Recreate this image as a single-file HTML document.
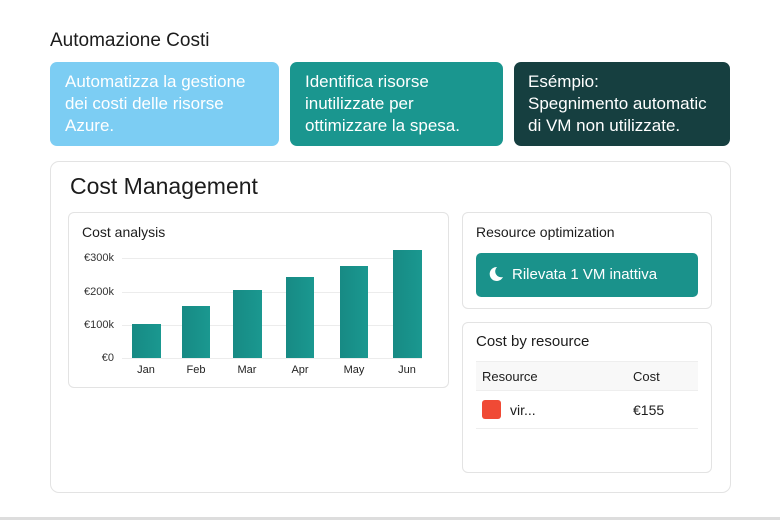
<!DOCTYPE html><html><head><style>
*{margin:0;padding:0;box-sizing:border-box}
body{width:780px;height:520px;background:#fff;font-family:"Liberation Sans",sans-serif;position:relative;overflow:hidden;color:#1c1c1c}
.a{position:absolute}
.card{position:absolute;border-radius:7px;color:#fff;font-size:17px;line-height:22px;padding:9px 15px}
.box{position:absolute;border:1px solid #e3e3e3;border-radius:6px;background:#fff}
.yl{position:absolute;font-size:11px;color:#333;right:0;width:50px;text-align:right}
.bar{position:absolute;background:linear-gradient(90deg,#178a84,#1a9890);bottom:162px}
.xl{position:absolute;font-size:11px;top:364px;width:40px;text-align:center;color:#222}
.gl{position:absolute;left:122px;width:300px;height:1px;background:#ececec}
</style></head><body>
<div class="a" style="left:50px;top:30px;font-size:19px">Automazione Costi</div>
<div class="card" style="left:50px;top:62px;width:229px;height:84px;background:#7ccdf3">Automatizza la gestione dei costi delle risorse Azure.</div>
<div class="card" style="left:290px;top:62px;width:213px;height:84px;background:#1a968f">Identifica risorse inutilizzate per ottimizzare la spesa.</div>
<div class="card" style="left:514px;top:62px;width:216px;height:84px;background:#163f40;padding-left:14px;white-space:nowrap;overflow:hidden">Esémpio:<br>Spegnimento automatic<br>di VM non utilizzate.</div>
<div class="box" style="left:50px;top:161px;width:681px;height:332px;border-radius:9px"></div>
<div class="a" style="left:70px;top:173px;font-size:23px">Cost Management</div>
<div class="box" style="left:68px;top:212px;width:381px;height:176px"></div>
<div class="a" style="left:82px;top:224px;font-size:14px">Cost analysis</div>
<div class="gl" style="top:258px"></div><div class="gl" style="top:292px"></div><div class="gl" style="top:325px"></div><div class="gl" style="top:358px"></div>
<div class="yl" style="left:64px;top:252px">€300k</div>
<div class="yl" style="left:64px;top:286px">€200k</div>
<div class="yl" style="left:64px;top:319px">€100k</div>
<div class="yl" style="left:64px;top:352px">€0</div>
<div class="bar" style="left:132px;width:29px;top:324px;height:34px"></div>
<div class="bar" style="left:182px;width:28px;top:306px;height:52px"></div>
<div class="bar" style="left:233px;width:29px;top:290px;height:68px"></div>
<div class="bar" style="left:286px;width:28px;top:277px;height:81px"></div>
<div class="bar" style="left:340px;width:28px;top:266px;height:92px"></div>
<div class="bar" style="left:393px;width:29px;top:250px;height:108px"></div>
<div class="xl" style="left:126px">Jan</div><div class="xl" style="left:176px">Feb</div><div class="xl" style="left:227px">Mar</div><div class="xl" style="left:280px">Apr</div><div class="xl" style="left:334px">May</div><div class="xl" style="left:387px">Jun</div>
<div class="box" style="left:462px;top:212px;width:250px;height:97px"></div>
<div class="a" style="left:476px;top:224px;font-size:14px">Resource optimization</div>
<div class="a" style="left:476px;top:253px;width:222px;height:44px;background:#1a928b;border-radius:5px;color:#fff;font-size:15px;line-height:44px;padding-left:36px">Rilevata 1 VM inattiva</div>
<svg class="a" style="left:488px;top:266px" width="16" height="16" viewBox="0 0 16 16"><path d="M9 1A7 7 0 1 0 15 11A6 6 0 0 1 9 1Z" fill="#fff"/></svg>
<div class="box" style="left:462px;top:322px;width:250px;height:151px"></div>
<div class="a" style="left:476px;top:333px;font-size:15px">Cost by resource</div>
<div class="a" style="left:476px;top:361px;width:222px;height:30px;background:#f8f8f8;border-top:1px solid #eee;border-bottom:1px solid #eee"></div>
<div class="a" style="left:482px;top:369px;font-size:13px">Resource</div>
<div class="a" style="left:633px;top:369px;font-size:13px">Cost</div>
<div class="a" style="left:482px;top:400px;width:19px;height:19px;background:#f04a35;border-radius:3px"></div>
<div class="a" style="left:510px;top:402px;font-size:14px">vir...</div>
<div class="a" style="left:633px;top:402px;font-size:14px">€155</div>
<div class="a" style="left:476px;top:428px;width:222px;height:1px;background:#eee"></div>
<div class="a" style="left:0;top:517px;width:780px;height:3px;background:#ddd"></div>
</body></html>
